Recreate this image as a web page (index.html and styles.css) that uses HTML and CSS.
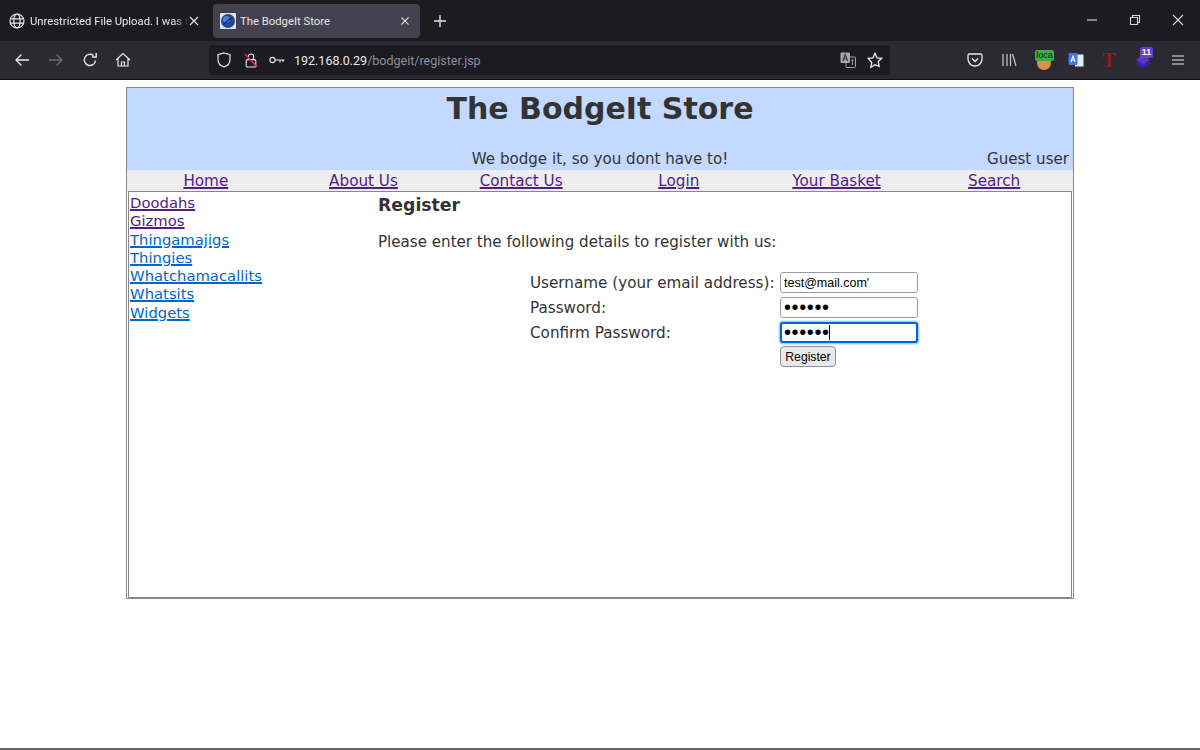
FILE: index.html
```html
<!DOCTYPE html>
<html lang="en">

<head>
     <meta charset="UTF-8">
     <title>The BodgeIt Store</title>
     <link rel="stylesheet" href="styles.css">
</head>

<body>

     <div class="tabbar">
          <div class="tab">
               <svg class="tab-icon" viewBox="0 0 16 16" fill="none" stroke="#e8e8ec" stroke-width="1.2">
                    <circle cx="8" cy="8" r="7" />
                    <ellipse cx="8" cy="8" rx="3.2" ry="7" />
                    <path d="M1.400 5.800h13.200M1.400 10.200h13.200" />
               </svg>
               <span class="tab-title fade">Unrestricted File Upload. I was t</span>
               <svg class="tab-close" viewBox="0 0 10 10" stroke="#e8e8ec" stroke-width="1.1"><path d="M1 1l8 8M9 1l-8 8" /></svg>
          </div>
          <div class="tab tab-active">
               <svg class="tab-icon" viewBox="0 0 16 16">
                    <rect width="16" height="16" rx="1" fill="#dfe4ee" />
                    <circle cx="8" cy="8" r="7" fill="#23459c" />
                    <circle cx="6.500" cy="6.500" r="3.500" fill="#4f7fd6" />
                    <path d="M4 11l7-6" stroke="#10235a" stroke-width="1.2" />
               </svg>
               <span class="tab-title">The BodgeIt Store</span>
               <svg class="tab-close" viewBox="0 0 10 10" stroke="#d8d8dc" stroke-width="1.1"><path d="M1.500 1.500l7 7M8.500 1.500l-7 7" /></svg>
          </div>
          <svg class="new-tab" viewBox="0 0 12 12" stroke="#e8e8ec" stroke-width="1.3"><path d="M6 0v12M0 6h12" /></svg>
          <div class="window-btns">
               <svg viewBox="0 0 12 12" stroke="#d8d8dc" stroke-width="1.1"><path d="M1 6h10" /></svg>
               <svg viewBox="0 0 12 12" fill="none" stroke="#d8d8dc" stroke-width="1.1"><path d="M1.500 3.500h7v7h-7zM3.500 3.500v-2h7v7h-2" /></svg>
               <svg viewBox="0 0 12 12" stroke="#d8d8dc" stroke-width="1.1"><path d="M1 1l10 10M11 1l-10 10" /></svg>
          </div>
     </div>

     <div class="toolbar">
          <svg class="tool tool-back" viewBox="0 0 16 16" fill="none" stroke="#e8e8ec" stroke-width="1.3"><path d="M15 8H2M7.500 2.500L2 8l5.500 5.500" /></svg>
          <svg class="tool tool-forward" viewBox="0 0 16 16" fill="none" stroke="#6f6e76" stroke-width="1.3"><path d="M1 8h13M8.500 2.500L14 8l-5.500 5.500" /></svg>
          <svg class="tool tool-reload" viewBox="0 0 16 16" fill="none" stroke="#e8e8ec" stroke-width="1.4"><path d="M13.500 8.500A5.600 5.600 0 1 1 11.500 3.600" /><path d="M10 5h4.200V1" /></svg>
          <svg class="tool tool-home" viewBox="0 0 16 16" fill="none" stroke="#e8e8ec" stroke-width="1.2"><path d="M1 8l7-6.500L15 8M3 6.500V14h10V6.500" /><path d="M6.500 14v-4h3v4" /></svg>

          <div class="urlbar">
               <svg class="url-shield" viewBox="0 0 16 16" fill="none" stroke="#e8e8ec" stroke-width="1.2"><path d="M8 1l6 1.800v5C14 11.500 11 14 8 15c-3-1-6-3.500-6-7.200v-5z" /></svg>
               <svg class="url-lock" viewBox="0 0 16 18" fill="none" stroke="#e8e8ec" stroke-width="1.2">
                    <rect x="2.500" y="8" width="11" height="8.500" rx="1.500" />
                    <path d="M5 8V4.500a3 3 0 0 1 6 0V8" />
                    <path d="M1 1.500l14 15" stroke="#e22850" stroke-width="1.600" />
               </svg>
               <svg class="url-key" viewBox="0 0 16 8" fill="none" stroke="#e8e8ec" stroke-width="1.1"><circle cx="3.500" cy="4" r="2.600" /><path d="M6 4h9.500M11 4v2.500M14 4v2" /></svg>
               <span class="url-text">192.168.0.29<span class="url-path">/bodgeit/register.jsp</span></span>
               <svg class="url-translate" viewBox="0 0 16 16">
                    <rect x="6" y="5" width="9.500" height="10.500" rx="1" fill="#1c1b22" stroke="#a5a5aa" />
                    <rect x="0.500" y="0.500" width="9.500" height="10.500" rx="1" fill="#a5a5aa" />
                    <path d="M2.800 9L5.200 2.500 7.600 9M3.700 7h3" fill="none" stroke="#33323a" stroke-width="1.100" />
                    <path d="M11 8h3M12.500 8v5" stroke="#a5a5aa" stroke-width="0.900" />
               </svg>
               <svg class="url-star" viewBox="0 0 16 16" fill="none" stroke="#e8e8ec" stroke-width="1.300"><path d="M8 1.300l2 4.500 4.800.500-3.600 3.200 1 4.800L8 12.800l-4.200 2.500 1-4.800L1.200 6.300 6 5.800z" /></svg>
          </div>

          <div class="extensions">
               <svg class="ext ext-pocket" viewBox="0 0 16 16" fill="none" stroke="#e8e8ec" stroke-width="1.300"><path d="M2.500 2h11A1.500 1.500 0 0 1 15 3.500V7A7 7 0 0 1 1 7V3.500A1.500 1.500 0 0 1 2.500 2z" /><path d="M5 6.500l3 3 3-3" /></svg>
               <svg class="ext ext-library" viewBox="0 0 16 16" fill="none" stroke="#c8c8cc" stroke-width="1.200"><path d="M2 2v12M6 2v12M9.500 2v12M11.500 2l3.500 12" /></svg>
               <div class="ext-loca">
                    <span class="loca-dish"></span>
                    <span class="loca-badge">loca</span>
               </div>
               <svg class="ext ext-trans" viewBox="0 0 16 16">
                    <rect x="7" y="2.500" width="8.500" height="12" fill="#e8eef8" />
                    <rect x="0.500" y="1" width="9" height="12" rx="1" fill="#3a79e0" />
                    <path d="M2.800 10L5 4l2.200 6M3.600 8h2.800" fill="none" stroke="#fff" stroke-width="1.100" />
               </svg>
               <span class="ext-t">T</span>
               <div class="ext-stack">
                    <svg viewBox="0 0 16 16"><path d="M8 4l7 5-7 5-7-5z" fill="#3b1fa8" /><path d="M8 1.500l6 4.500-6 4.500L2 6z" fill="#5b34c9" /></svg>
                    <span class="stack-badge">11</span>
               </div>
               <svg class="ext ext-menu" viewBox="0 0 12 10" stroke="#e8e8ec" stroke-width="1.200"><path d="M0 1h12M0 5h12M0 9h12" /></svg>
          </div>
     </div>

     <div class="viewport">
          <div class="page">
               <div class="banner">
                    <h1>The BodgeIt Store</h1>
                    <div class="banner-row">
                         <span></span>
                         <span>We bodge it, so you dont have to!</span>
                         <span class="guest">Guest user</span>
                    </div>
               </div>

               <nav class="menu">
                    <a href="#">Home</a>
                    <a href="#">About Us</a>
                    <a href="#">Contact Us</a>
                    <a href="#">Login</a>
                    <a href="#">Your Basket</a>
                    <a href="#">Search</a>
               </nav>

               <div class="content">
                    <div class="sidebar">
                         <a href="#">Doodahs</a>
                         <a href="#">Gizmos</a>
                         <a href="#" class="fresh">Thingamajigs</a>
                         <a href="#" class="fresh">Thingies</a>
                         <a href="#" class="fresh">Whatchamacallits</a>
                         <a href="#" class="fresh">Whatsits</a>
                         <a href="#" class="fresh">Widgets</a>
                    </div>
                    <div class="main">
                         <h3>Register</h3>
                         <p>Please enter the following details to register with us:</p>
                         <form class="register">
                              <label>Username (your email address):</label>
                              <input type="text" value="test@mail.com'">
                              <label>Password:</label>
                              <input type="password" value="secret">
                              <label>Confirm Password:</label>
                              <div class="caret-wrap">
                                   <input class="focused" type="password" value="secret">
                                   <span class="caret"></span>
                              </div>
                              <span></span>
                              <div><button type="button">Register</button></div>
                         </form>
                    </div>
               </div>
          </div>
     </div>

     <div class="bottom-line"></div>

</body>

</html>
```

FILE: styles.css
```css
* {
     box-sizing: border-box;
     margin: 0;
     padding: 0;
}

body {
     height: 750px;
     display: flex;
     flex-direction: column;
     overflow: hidden;
     background: white;
     font-family: 'DejaVu Sans', Verdana, sans-serif;
     font-size: 15.100px;
     color: #333;
}

svg {
     display: block;
     flex: none;
}

/* browser chrome */
.tabbar {
     height: 41px;
     flex: none;
     display: flex;
     align-items: flex-start;
     background: #1c1b22;
     font-family: Roboto, 'Noto Sans', sans-serif;
     font-size: 11.300px;
     color: #e8e8ec;
}

.tab {
     width: 207px;
     height: 34px;
     margin-top: 4px;
     padding: 0 7px 0 9px;
     display: flex;
     align-items: center;
     border-radius: 4px;
}

.tab-active {
     margin-left: 6px;
     padding-left: 7px;
     background: #42414d;
}

.tab-icon {
     width: 16px;
     height: 16px;
     margin-right: 5px;
}

.tab-active .tab-icon {
     margin-right: 4px;
}

.tab-title {
     flex: 1;
     white-space: nowrap;
}

.fade {
     -webkit-mask-image: linear-gradient(to right, black 90%, transparent);
     mask-image: linear-gradient(to right, black 90%, transparent);
}

.tab-close {
     width: 10px;
     height: 10px;
     margin-right: 1px;
}

.tab-active .tab-close {
     margin-right: 3px;
}

.new-tab {
     width: 12px;
     height: 12px;
     margin: 15px 0 0 14px;
}

.window-btns {
     margin: 14px 16px 0 auto;
     display: flex;
     gap: 31px;
}

.window-btns svg {
     width: 12px;
     height: 12px;
}

.toolbar {
     height: 39px;
     flex: none;
     display: flex;
     align-items: center;
     background: #2b2a33;
     border-bottom: 1px solid #0c0c0d;
}

.tool {
     width: 16px;
     height: 16px;
}

.tool-back {
     margin-left: 14px;
}

.tool-forward {
     margin-left: 18px;
}

.tool-reload {
     margin-left: 18px;
}

.tool-home {
     margin-left: 17px;
}

.urlbar {
     width: 681px;
     height: 30px;
     margin-left: 78px;
     padding: 0 7px 0 7px;
     display: flex;
     align-items: center;
     background: #1c1b22;
     border-radius: 4px;
     font-family: Roboto, 'Noto Sans', sans-serif;
     font-size: 12.500px;
     color: #e8e8ec;
}

.url-shield {
     width: 16px;
     height: 16px;
}

.url-lock {
     width: 14px;
     height: 17px;
     margin-left: 12px;
}

.url-key {
     width: 16px;
     height: 8px;
     margin-left: 11px;
}

.url-text {
     margin-left: 9px;
     flex: 1;
}

.url-path {
     color: #8f8f9d;
}

.url-translate {
     width: 16px;
     height: 16px;
}

.url-star {
     width: 16px;
     height: 16px;
     margin-left: 11px;
}

.extensions {
     flex: 1;
     display: flex;
     align-items: center;
     padding-left: 77px;
}

.ext {
     width: 16px;
     height: 16px;
}

.ext-library {
     margin-left: 18px;
}

.ext-loca {
     width: 20px;
     height: 20px;
     margin-left: 18px;
     position: relative;
}

.loca-dish {
     position: absolute;
     left: 2px;
     top: 6px;
     width: 14px;
     height: 14px;
     border-radius: 50%;
     background: #e0904a;
}

.loca-badge {
     position: absolute;
     left: 0;
     top: 0;
     width: 19px;
     height: 11px;
     background: #3fae49;
     border-radius: 2px;
     font-family: 'Liberation Sans', sans-serif;
     font-size: 9px;
     line-height: 11px;
     text-align: center;
     color: #10220f;
}

.ext-trans {
     margin-left: 13px;
}

.ext-t {
     width: 16px;
     margin-left: 17px;
     font-family: 'Liberation Serif', serif;
     font-size: 20px;
     font-weight: bold;
     line-height: 20px;
     text-align: center;
     color: #8f1f18;
}

.ext-stack {
     width: 20px;
     height: 20px;
     margin-left: 17px;
     position: relative;
}

.ext-stack svg {
     position: absolute;
     left: 0;
     top: 3px;
     width: 18px;
     height: 18px;
}

.stack-badge {
     position: absolute;
     left: 6px;
     top: -3px;
     width: 13px;
     height: 11px;
     background: #6a3fc8;
     border-radius: 2px;
     font-family: 'Liberation Sans', sans-serif;
     font-size: 9px;
     font-weight: bold;
     line-height: 11px;
     text-align: center;
     color: white;
}

.ext-menu {
     width: 12px;
     height: 10px;
     margin-left: 18px;
}

/* the page */
.viewport {
     flex: 1;
     padding: 7px 126px 0;
}

.page {
     height: 512px;
     display: flex;
     flex-direction: column;
     border: 1px solid #888;
}

.banner {
     height: 82px;
     flex: none;
     display: flex;
     flex-direction: column;
     justify-content: space-between;
     background: #c3d9ff;
}

h1 {
     font-size: 30px;
     line-height: 42px;
     text-align: center;
}

.banner-row {
     display: grid;
     grid-template-columns: 1fr auto 1fr;
     padding: 0 4px 1px;
     line-height: 19px;
}

.guest {
     text-align: right;
}

.menu {
     height: 21px;
     flex: none;
     display: grid;
     grid-template-columns: repeat(6, 1fr);
     background: #eee;
     font-size: 15.200px;
     line-height: 22px;
     text-align: center;
}

a {
     color: #551a8b;
     text-decoration-thickness: 1.500px;
}

a.fresh {
     color: #0066cc;
}

.content {
     flex: 1;
     display: flex;
     margin: 0 1px 0;
     border: 1px solid #888;
}

.sidebar {
     width: 249px;
     flex: none;
     padding: 2px 0 0 1px;
     display: flex;
     flex-direction: column;
     align-items: flex-start;
     font-size: 14.800px;
     line-height: 18.300px;
}

.main h3 {
     font-size: 17.300px;
     line-height: 22px;
     margin-top: 2px;
}

.main p {
     margin-top: 17px;
     line-height: 19px;
}

.register {
     margin: 20px 0 0 152px;
     display: grid;
     grid-template-columns: 250px 138px;
     row-gap: 4px;
     align-items: center;
}

.register label {
     white-space: nowrap;
     font-size: 15.200px;
}

.register input {
     display: block;
     width: 138px;
     height: 21px;
     padding: 0 3px;
     background: white;
     border: 1px solid #9a9aa6;
     border-radius: 3px;
     font-family: 'Liberation Sans', Arial, sans-serif;
     font-size: 12.500px;
     color: black;
     outline: none;
}

.register input[type="password"] {
     font-size: 20px;
     letter-spacing: 0.600px;
}

.register input.focused {
     border: 2px solid #0060df;
     box-shadow: 0 0 0 1.500px #a7d3f5;
     padding: 0 2px;
}

.caret-wrap {
     position: relative;
}

.caret {
     position: absolute;
     left: 49px;
     top: 3px;
     width: 1px;
     height: 15px;
     background: black;
}

.register button {
     width: 56px;
     height: 21px;
     margin-top: -1px;
     display: block;
     background: #e9e9ed;
     border: 1px solid #8f8f9d;
     border-radius: 4px;
     font-family: 'Liberation Sans', Arial, sans-serif;
     font-size: 12.200px;
     color: black;
}

.bottom-line {
     height: 2px;
     flex: none;
     background: #666;
}
```
